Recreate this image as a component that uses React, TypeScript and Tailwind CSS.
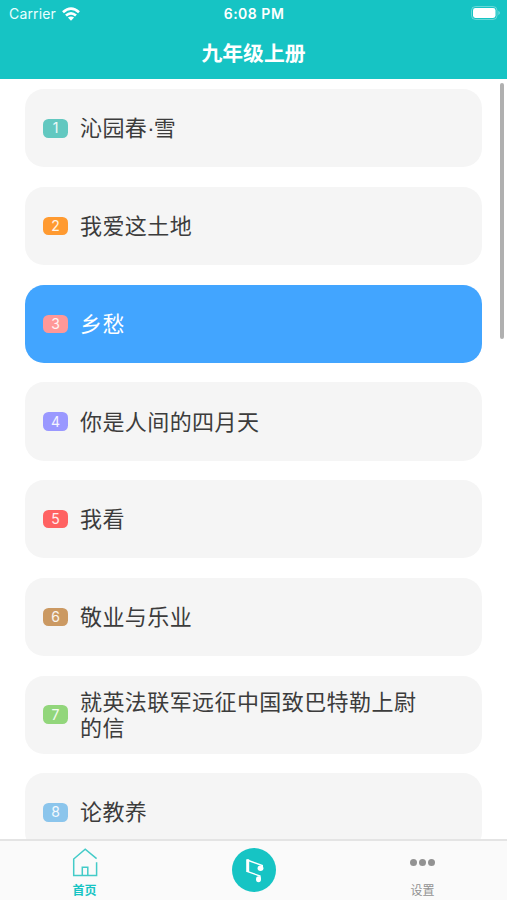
const lessons = [
  { title: '沁园春·雪', color: 'bg-[#62c8c0]' },
  { title: '我爱这土地', color: 'bg-[#ff9a30]' },
  { title: '乡愁', color: 'bg-[#ff9898]', active: true },
  { title: '你是人间的四月天', color: 'bg-[#9a98ff]' },
  { title: '我看', color: 'bg-[#ff6262]' },
  { title: '敬业与乐业', color: 'bg-[#cb9962]' },
  { title: '就英法联军远征中国致巴特勒上尉的信', color: 'bg-[#92d67b]' },
  { title: '论教养', color: 'bg-[#8bc5ec]' },
];

function Header() {
  return (
    <header className="h-[79px] shrink-0 bg-[#16c4c4] text-white">
      <div className="grid h-[27px] grid-cols-3 items-center pl-[9px] pr-[6px] font-['Inter','Liberation_Sans',sans-serif] text-[14px]">
        <div className="flex items-center gap-[6px]">
          <span className="tracking-[0.15px] text-[#eaffff]">Carrier</span>
          <svg width="18" height="14" viewBox="0 0 18 14" fill="none" stroke="white" strokeWidth="2.7">
            <path d="M1 5.2Q9-2 17 5.2" />
            <path d="M4 8.6Q9 4.2 14 8.6" />
            <path d="M9 13.8L5.9 10.6Q9 8.4 12.1 10.6Z" fill="white" stroke="none" />
          </svg>
        </div>
        <span className="whitespace-nowrap pr-[2px] text-center text-[14px] font-semibold tracking-[0.5px]">6:08 PM</span>
        <svg className="-mt-px justify-self-end" width="30" height="14" viewBox="0 0 30 14">
          <rect x=".5" y=".5" width="25.5" height="13" rx="4" fill="none" stroke="white" strokeOpacity=".35" />
          <rect x="2" y="2" width="22.5" height="10" rx="2.4" fill="white" />
          <path d="M27.5 4.8Q30 7 27.5 9.2Z" fill="white" fillOpacity=".5" />
        </svg>
      </div>
      <h1 className="text-center text-[20.8px] font-bold leading-[50px]">九年级上册</h1>
    </header>
  );
}

function HomeIcon() {
  return (
    <svg width="26" height="29" viewBox="0 0 26 29" fill="none" stroke="#43cbc8" strokeWidth="1.5">
      <path d="M24.6 14.3V27.5H1.7V11L13.2 1.2L24.6 10.7" />
      <path d="M10.3 27.5V19.2H15.8V27.5" />
    </svg>
  );
}

function MusicButton() {
  return (
    <svg width="44" height="44" viewBox="0 0 44 44">
      <circle cx="22" cy="22" r="22" fill="#16c4c4" />
      <g fill="none" stroke="white">
        <path d="M15.7 11.3V24" strokeWidth="3" />
        <path d="M15 12L30.3 17.5V20" strokeWidth="1.4" />
        <path d="M15 23.4L28 28V31" strokeWidth="1.4" />
      </g>
      <ellipse cx="28.5" cy="20.3" rx="2.9" ry="2.7" fill="white" />
      <ellipse cx="26.5" cy="31.3" rx="2.5" ry="3" fill="white" />
    </svg>
  );
}

function LessonTitle({ text }: { text: string }) {
  const [head, tail] = text.split('·');
  return (
    <span className="-mt-[4px] ml-[12px] w-[350px] text-[22px] leading-[26px] tracking-[0.42px]">
      {head}
      {tail && (
        <>
          <span className="font-['Liberation_Sans',sans-serif] leading-none tracking-[-0.9px]">·</span>
          {tail}
        </>
      )}
    </span>
  );
}

export default function App() {
  return (
    <div className="flex h-[900px] w-[507px] flex-col overflow-hidden bg-white font-['Noto_Sans_CJK_SC',sans-serif]">
      <Header />
      <main className="relative min-h-0 flex-1 overflow-hidden px-[25px] pt-[10.4px]">
        <ul className="flex flex-col gap-[19.6px]">
          {lessons.map((lesson, i) => (
            <li
              key={lesson.title}
              className={`flex h-[78.1px] shrink-0 items-center rounded-[19px] pl-[18px] ${lesson.active ? 'bg-[#42a5ff] text-white' : 'bg-[#f5f5f5] text-[#3c3c3c]'}`}
            >
              <span className={`flex h-[18.5px] w-[25px] shrink-0 items-center justify-center rounded-[5.5px] font-['Inter','Liberation_Sans',sans-serif] text-[14px] leading-none text-white/90 ${lesson.color}`}>
                {i + 1}
              </span>
              <LessonTitle text={lesson.title} />
            </li>
          ))}
        </ul>
        <div className="absolute right-[3px] top-[4px] h-[256px] w-[4px] rounded-full bg-[#b0b0b0]" />
      </main>
      <nav className="grid h-[61px] shrink-0 grid-cols-3 border-t-2 border-[#e4e4e4] bg-[#fafafa] text-[12px] leading-[16px]">
        <div className="flex flex-col items-center pt-[7px] font-bold text-[#16c4c4]">
          <HomeIcon />
          <span className="mt-[5px]">首页</span>
        </div>
        <div className="flex justify-center pt-[7px]">
          <MusicButton />
        </div>
        <div className="flex flex-col items-center text-[#929292]">
          <div className="mt-[18px] flex gap-[2.6px]">
            <i className="size-[6.8px] rounded-full bg-[#929292]" />
            <i className="size-[6.8px] rounded-full bg-[#929292]" />
            <i className="size-[6.8px] rounded-full bg-[#929292]" />
          </div>
          <span className="mt-[16px]">设置</span>
        </div>
      </nav>
    </div>
  );
}
